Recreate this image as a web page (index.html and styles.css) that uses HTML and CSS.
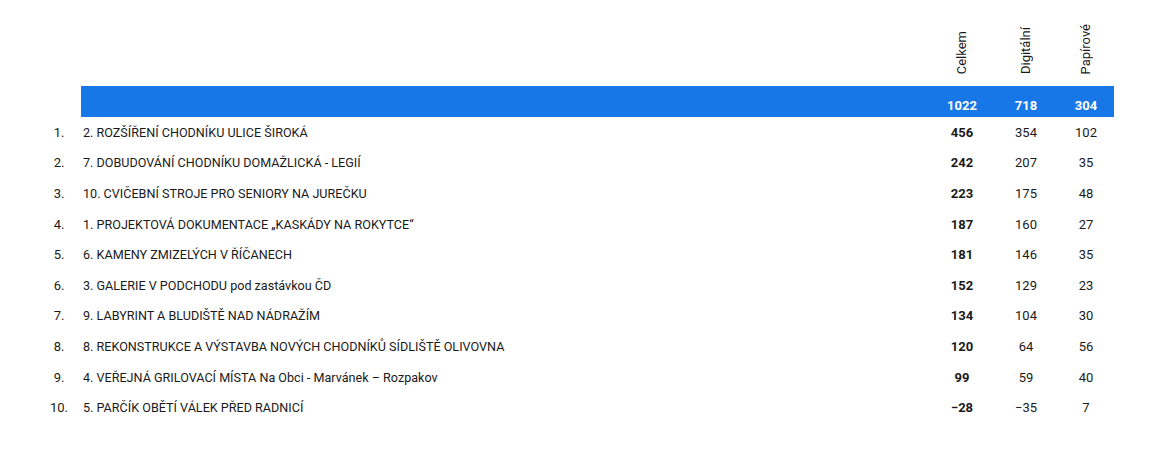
FILE: index.html
```html
<!DOCTYPE html>
<html lang="cs">

<head>
    <meta charset="UTF-8">
    <meta name="viewport" content="width=device-width, initial-scale=1.0">
    <title>Výsledky hlasování</title>
    <link rel="stylesheet" href="styles.css">
</head>

<body>
    <div class="results">
        <div class="row head">
            <div class="rank"></div>
            <div class="name"></div>
            <div class="num"><span class="vertical">Celkem</span></div>
            <div class="num"><span class="vertical">Digitální</span></div>
            <div class="num"><span class="vertical">Papírové</span></div>
        </div>
        <div class="row total">
            <div class="rank"></div>
            <div class="name"></div>
            <div class="num">1022</div>
            <div class="num">718</div>
            <div class="num">304</div>
        </div>
        <div class="row">
            <div class="rank">1.</div>
            <div class="name">2. ROZŠÍŘENÍ CHODNÍKU ULICE ŠIROKÁ</div>
            <div class="num sum">456</div>
            <div class="num">354</div>
            <div class="num">102</div>
        </div>
        <div class="row">
            <div class="rank">2.</div>
            <div class="name">7. DOBUDOVÁNÍ CHODNÍKU DOMAŽLICKÁ - LEGIÍ</div>
            <div class="num sum">242</div>
            <div class="num">207</div>
            <div class="num">35</div>
        </div>
        <div class="row">
            <div class="rank">3.</div>
            <div class="name">10. CVIČEBNÍ STROJE PRO SENIORY NA JUREČKU</div>
            <div class="num sum">223</div>
            <div class="num">175</div>
            <div class="num">48</div>
        </div>
        <div class="row">
            <div class="rank">4.</div>
            <div class="name">1. PROJEKTOVÁ DOKUMENTACE „KASKÁDY NA ROKYTCE“</div>
            <div class="num sum">187</div>
            <div class="num">160</div>
            <div class="num">27</div>
        </div>
        <div class="row">
            <div class="rank">5.</div>
            <div class="name">6. KAMENY ZMIZELÝCH V ŘÍČANECH</div>
            <div class="num sum">181</div>
            <div class="num">146</div>
            <div class="num">35</div>
        </div>
        <div class="row">
            <div class="rank">6.</div>
            <div class="name">3. GALERIE V PODCHODU pod zastávkou ČD</div>
            <div class="num sum">152</div>
            <div class="num">129</div>
            <div class="num">23</div>
        </div>
        <div class="row">
            <div class="rank">7.</div>
            <div class="name">9. LABYRINT A BLUDIŠTĚ NAD NÁDRAŽÍM</div>
            <div class="num sum">134</div>
            <div class="num">104</div>
            <div class="num">30</div>
        </div>
        <div class="row">
            <div class="rank">8.</div>
            <div class="name">8. REKONSTRUKCE A VÝSTAVBA NOVÝCH CHODNÍKŮ SÍDLIŠTĚ OLIVOVNA</div>
            <div class="num sum">120</div>
            <div class="num">64</div>
            <div class="num">56</div>
        </div>
        <div class="row">
            <div class="rank">9.</div>
            <div class="name">4. VEŘEJNÁ GRILOVACÍ MÍSTA Na Obci - Marvánek – Rozpakov</div>
            <div class="num sum">99</div>
            <div class="num">59</div>
            <div class="num">40</div>
        </div>
        <div class="row">
            <div class="rank">10.</div>
            <div class="name">5. PARČÍK OBĚTÍ VÁLEK PŘED RADNICÍ</div>
            <div class="num sum">−28</div>
            <div class="num">−35</div>
            <div class="num">7</div>
        </div>
    </div>
</body>

</html>
```

FILE: styles.css
```css
body {
    font-family: Roboto, "Liberation Sans", sans-serif;
    font-size: 13px;
    color: #1a1a1a;
    margin: 0;
    padding: 0;
    background-color: #fff;
}

.results {
    padding: 0 49px 0 37px;
}

.row {
    display: grid;
    grid-template-columns: 44px 1fr 64px 64px 56px;
    align-items: center;
    height: 30.6px;
}

.rank {
    text-align: center;
}

.name {
    padding-left: 2px;
    font-size: 12.6px;
}

.num {
    text-align: center;
}

.sum {
    font-weight: bold;
}

.head {
    height: 86px;
    align-items: end;
}

.head .num {
    padding-bottom: 9px;
}

.vertical {
    display: inline-block;
    writing-mode: vertical-rl;
    transform: rotate(180deg);
    line-height: 14px;
}

.total {
    height: 31px;
    align-items: end;
    color: #fff;
    font-weight: bold;
}

.total > div {
    background-color: #1877e6;
    height: 100%;
    box-sizing: border-box;
    padding-top: 12px;
}

.total .rank {
    background-color: transparent;
}
```
